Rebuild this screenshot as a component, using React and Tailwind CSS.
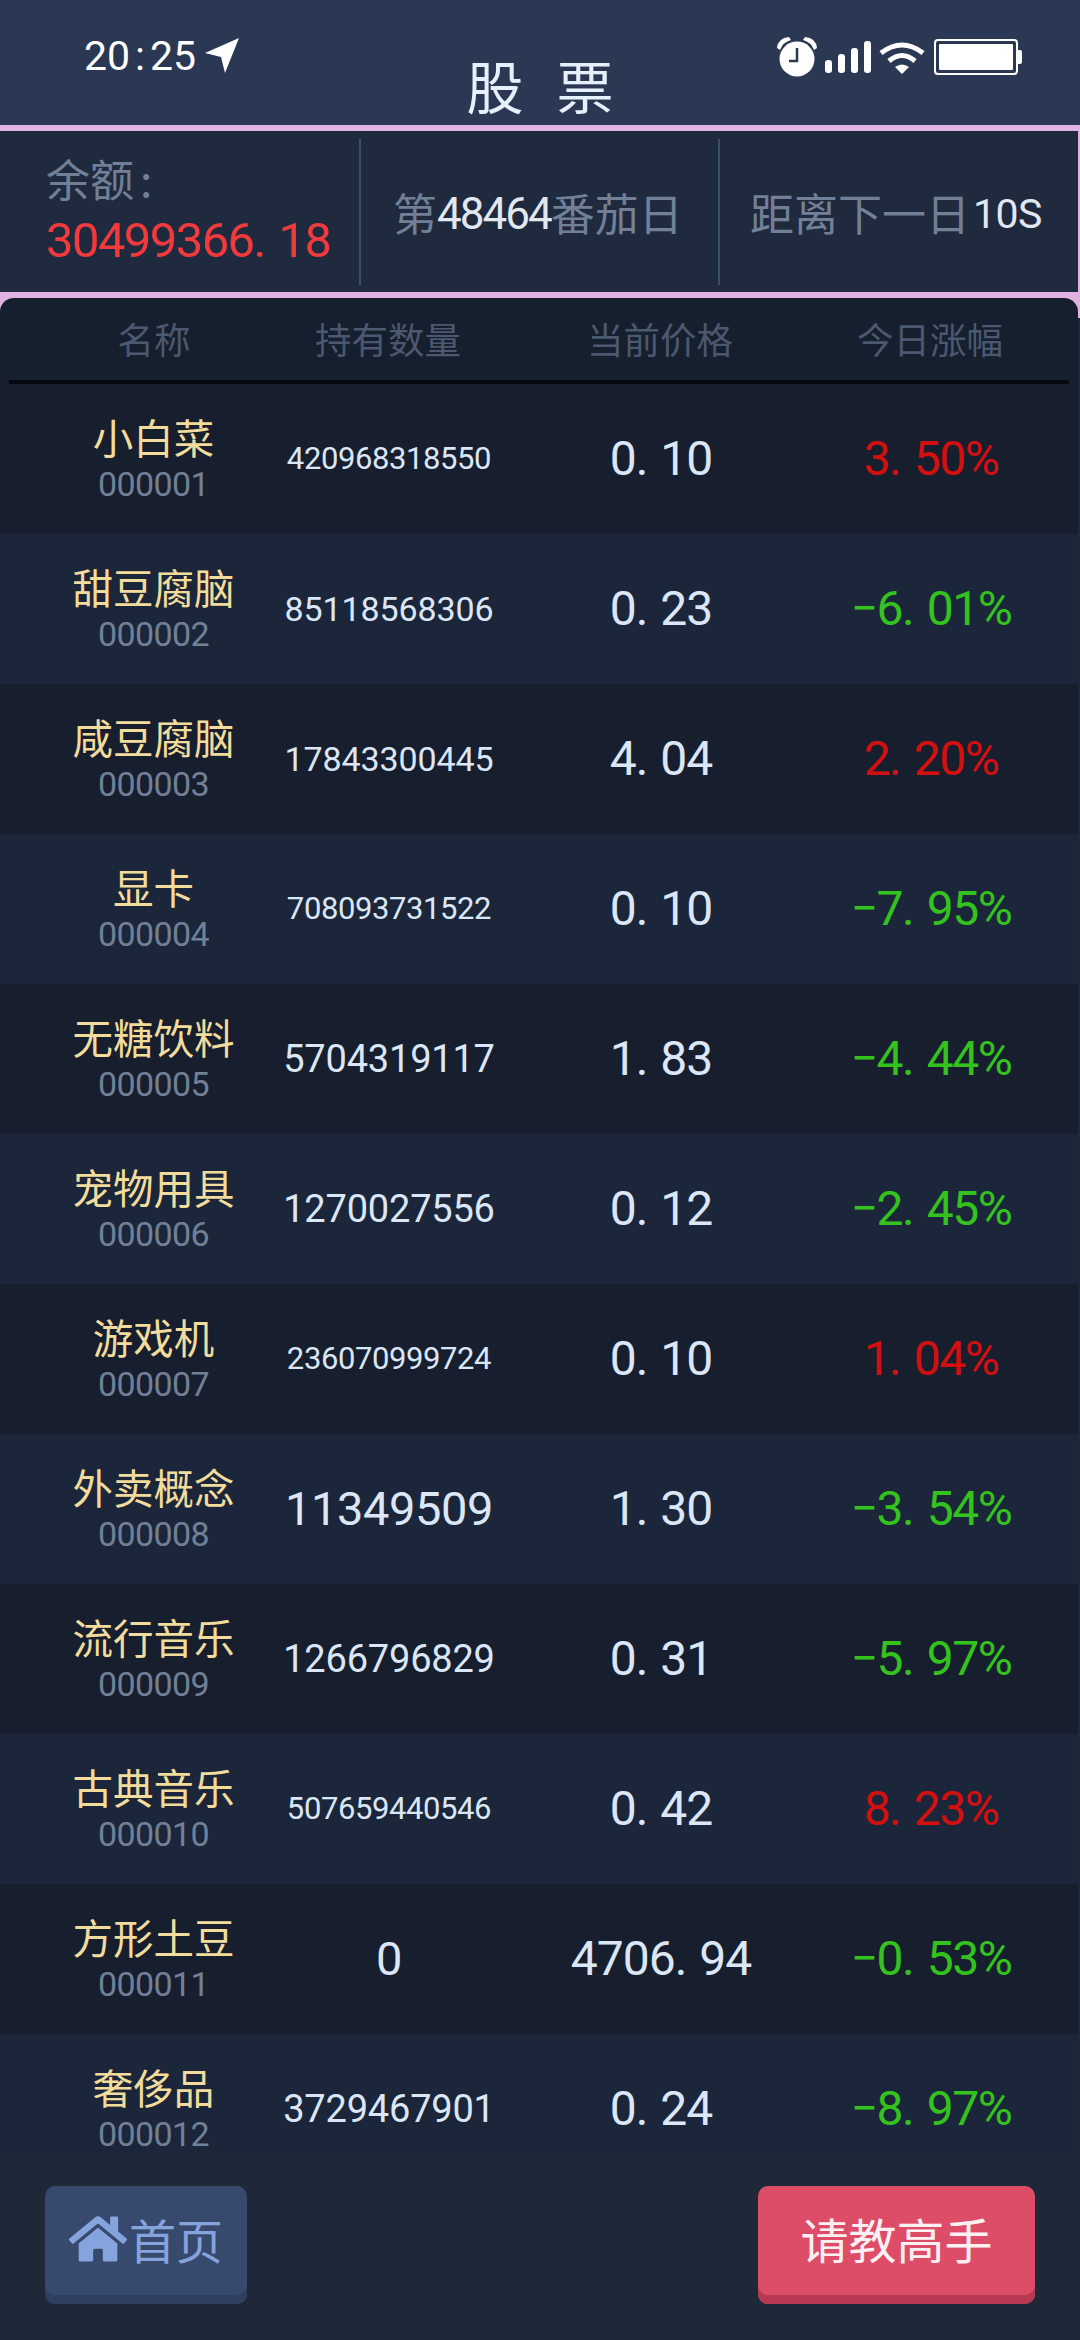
import { FaHome } from "react-icons/fa";

const font = { fontFamily: '"Noto Sans CJK SC", sans-serif' };
const digits = { fontFamily: "Roboto, sans-serif" };

const stocks = [
  { name: "小白菜", code: "000001", qty: "420968318550", price: "0.10", change: "3.50%" },
  { name: "甜豆腐脑", code: "000002", qty: "85118568306", price: "0.23", change: "−6.01%" },
  { name: "咸豆腐脑", code: "000003", qty: "17843300445", price: "4.04", change: "2.20%" },
  { name: "显卡", code: "000004", qty: "708093731522", price: "0.10", change: "−7.95%" },
  { name: "无糖饮料", code: "000005", qty: "5704319117", price: "1.83", change: "−4.44%" },
  { name: "宠物用具", code: "000006", qty: "1270027556", price: "0.12", change: "−2.45%" },
  { name: "游戏机", code: "000007", qty: "236070999724", price: "0.10", change: "1.04%" },
  { name: "外卖概念", code: "000008", qty: "11349509", price: "1.30", change: "−3.54%" },
  { name: "流行音乐", code: "000009", qty: "1266796829", price: "0.31", change: "−5.97%" },
  { name: "古典音乐", code: "000010", qty: "507659440546", price: "0.42", change: "8.23%" },
  { name: "方形土豆", code: "000011", qty: "0", price: "4706.94", change: "−0.53%" },
  { name: "奢侈品", code: "000012", qty: "3729467901", price: "0.24", change: "−8.97%" },
];

// quantity text shrinks with its length in the original
function qtyClass(qty) {
  if (qty.length >= 12) return "text-[31px] tracking-[-0.4px]";
  if (qty.length === 11) return "text-[34px] tracking-[-0.1px]";
  if (qty.length === 10) return "text-[38px] tracking-[-0.2px]";
  return "text-[47px] tracking-[-0.4px]";
}

// the decimal point sits in a wide cell in the original font
function Num({ value }) {
  const [a, b] = value.split(".");
  if (b === undefined) return <span>{value}</span>;
  return (
    <span>
      {a}
      <span className="tracking-[12px]">.</span>
      {b}
    </span>
  );
}

function StatusIcons() {
  return (
    <div className="flex items-center gap-[8px] text-white">
      <svg width="40" height="42" viewBox="0 0 40 42" fill="none">
        <circle cx="20" cy="23" r="17.5" fill="#fff" />
        <path d="M0 12 Q1 2 12 1 L14 4 Q6 6 3 14 Z M40 12 Q39 2 28 1 L26 4 Q34 6 37 14 Z" fill="#fff" />
        <path d="M20 12 V25 H12" stroke="#2b3853" strokeWidth="2.5" />
      </svg>
      <svg width="46" height="34" viewBox="0 0 46 34" fill="#fff">
        <rect x="0" y="20" width="7" height="13" rx="3" />
        <rect x="13" y="14" width="7" height="19" rx="3" />
        <rect x="26" y="8" width="7" height="25" rx="3" />
        <rect x="39" y="1" width="7" height="32" rx="3" />
      </svg>
      <svg width="46" height="34" viewBox="0 0 46 34" fill="none" stroke="#fff" strokeWidth="5">
        <path d="M2 13 Q23 -3 44 13" />
        <path d="M10 21 Q23 10 36 21" />
        <path d="M23 34 L16 27 Q23 22 30 27 Z" fill="#fff" stroke="none" />
      </svg>
      <div className="flex items-center ml-[1px]">
        <div className="w-[84px] h-[36px] rounded-[4px] border-[2px] border-white p-[3px]">
          <div className="w-full h-full bg-white rounded-[1px]" />
        </div>
        <div className="w-[4px] h-[14px] bg-white rounded-r-[2px]" />
      </div>
    </div>
  );
}

export default function App() {
  return (
    <div className="w-[1080px] h-[2340px] overflow-hidden flex flex-col bg-[#1f2839]" style={font}>
      {/* header */}
      <div className="h-[125px] grid bg-[#2b3853] shrink-0">
        <div className="[grid-area:1/1] flex justify-between items-start pl-[84px] pr-[58px] pt-[36px]">
          <div className="flex items-start">
            <span className="text-[41px] leading-[40px] text-white" style={digits}>
              20<span className="mx-[5px]">:</span>25
            </span>
            <svg className="ml-[8px] mt-[1px]" width="36" height="36" viewBox="0 0 36 36" fill="#fff">
              <path d="M35 1 L1 16 L17 20 L21 36 Z" />
            </svg>
          </div>
          <StatusIcons />
        </div>
        <div className="[grid-area:1/1] flex justify-center items-end pb-[6px]">
          <span className="text-[57px] leading-[70px] text-[#e6effc] flex gap-[33px]">
            <span>股</span>
            <span>票</span>
          </span>
        </div>
      </div>

      {/* info bar */}
      <div className="h-[173px] shrink-0 flex items-center bg-[#1f2a3f] border-y-[6px] border-r-[2px] border-[#e0b2e2] pl-[46px]">
        <div className="w-[313px] h-[146px] flex flex-col justify-center">
          <div className="text-[44px] leading-[60px] text-[#718096] mt-[-5px]">
            余额<span className="ml-[6px]">:</span>
          </div>
          <div className="text-[49px] leading-[60px] text-[#f23a3c] tracking-[-1.6px] mt-[3px]" style={digits}>
            <Num value="30499366.18" />
          </div>
        </div>
        <div className="w-[2px] h-[146px] bg-[#38506f]" />
        <div className="w-[357px] h-[146px] flex items-center pl-[32px] text-[44px] text-[#718096] whitespace-nowrap">
          第<span className="text-[#e2e8f0] text-[44px] tracking-[-2px] mt-[5px]" style={digits}>48464</span>番茄日
        </div>
        <div className="w-[2px] h-[146px] bg-[#38506f]" />
        <div className="flex-1 h-[146px] flex items-center pl-[30px] text-[44px] text-[#718096] whitespace-nowrap">
          距离下一日<span className="text-[#e2e8f0] text-[41px] tracking-[-0.5px] ml-[3px] mt-[6px]" style={digits}>10S</span>
        </div>
      </div>

      {/* table, pink shows behind its rounded top corners */}
      <div className="flex-1 min-h-0 overflow-hidden bg-[linear-gradient(#e0b2e2_20px,#1f2839_20px)]">
        <div className="h-full overflow-hidden mr-[2px] rounded-t-[14px] bg-[#161f2d]">
          <div className="h-[86px] mx-[9px] border-b-[4px] border-[#05080f] grid grid-cols-[274px_210px_334px_206px] items-center text-center text-[36.5px] text-[#4a5870]">
            <div className="pl-[16px]">名称</div>
            <div>持有数量</div>
            <div>当前价格</div>
            <div>今日涨幅</div>
          </div>
          {stocks.map((s, i) => (
            <div
              key={s.code}
              className={`h-[150px] grid grid-cols-[283px_212px_332px_208px] items-center text-center ${i % 2 === 0 ? "bg-[#171f2e]" : "bg-[#1b263a]"}`}
            >
              <div className="pl-[24px] pb-[4px] flex flex-col items-center">
                <div className="text-[40.5px] leading-[50px] text-[#f2dc9c] whitespace-nowrap">{s.name}</div>
                <div className="text-[34px] leading-[36px] mt-[4px] text-[#718096] tracking-[-0.6px]" style={digits}>
                  {s.code}
                </div>
              </div>
              <div className={`text-[#dbe6f7] whitespace-nowrap ${qtyClass(s.qty)}`} style={digits}>
                {s.qty}
              </div>
              <div className="text-[48px] text-[#dbe6f7] tracking-[-1px] whitespace-nowrap" style={digits}>
                <Num value={s.price} />
              </div>
              <div
                className={`text-[48px] whitespace-nowrap tracking-[-1.5px] ${s.change.startsWith("−") ? "text-[#34c21e]" : "text-[#d40f0f]"}`}
                style={digits}
              >
                <Num value={s.change} />
              </div>
            </div>
          ))}
        </div>
      </div>

      {/* bottom buttons */}
      <div className="h-[188px] shrink-0 flex justify-between pl-[45px] pr-[45px] pt-[34px] bg-[#1f2839]">
        <button className="w-[202px] h-[118px] rounded-[10px] bg-[#374a6e] shadow-[inset_0_-9px_0_#2f3f60] flex items-center justify-center pb-[12px] text-[47px] text-[#85a3dc]">
          <FaHome className="text-[58px]" />
          <span className="ml-[2px]">首页</span>
        </button>
        <button className="w-[277px] h-[118px] rounded-[10px] bg-[#de4d67] shadow-[inset_0_-9px_0_#b83a52] flex items-center justify-center pb-[15px] text-[48px] text-[#fdf0f2]">
          请教高手
        </button>
      </div>
    </div>
  );
}
